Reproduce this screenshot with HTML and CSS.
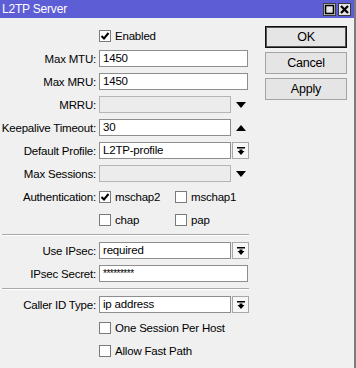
FILE: index.html
```html
<!DOCTYPE html>
<html lang="en">
  <head>
    <meta charset="UTF-8" />
    <title>L2TP Server</title>
    <link rel="stylesheet" href="styles.css">
  </head>
  <body>
    <div class="window">
      <!-- Title bar -->
      <div class="titlebar">
        <span class="title">L2TP Server</span>
        <div class="win-btns">
          <span class="win-btn">
            <svg width="11" height="11" viewBox="0 0 11 11"><rect x="1.5" y="1.5" width="8" height="8" fill="none" stroke="#000" stroke-width="1.6"/></svg>
          </span>
          <span class="win-btn">
            <svg width="11" height="11" viewBox="0 0 11 11"><path d="M2 2 L9 9 M9 2 L2 9" stroke="#000" stroke-width="2.2"/></svg>
          </span>
        </div>
      </div>

      <div class="content">
        <div class="form">
          <div class="row">
            <span class="label"></span>
            <label class="check"><span class="box checked"></span>Enabled</label>
          </div>
          <div class="row">
            <span class="label">Max MTU:</span>
            <div class="field"><div class="input wide">1450</div></div>
          </div>
          <div class="row">
            <span class="label">Max MRU:</span>
            <div class="field"><div class="input wide">1450</div></div>
          </div>
          <div class="row">
            <span class="label">MRRU:</span>
            <div class="field">
              <div class="input disabled"></div>
              <span class="arrow"><svg width="10" height="6" viewBox="0 0 10 6"><path d="M0 0 H10 L5 6 Z" fill="#000"/></svg></span>
            </div>
          </div>
          <div class="row">
            <span class="label">Keepalive Timeout:</span>
            <div class="field">
              <div class="input">30</div>
              <span class="arrow"><svg width="10" height="6" viewBox="0 0 10 6"><path d="M0 6 H10 L5 0 Z" fill="#000"/></svg></span>
            </div>
          </div>
          <div class="row">
            <span class="label">Default Profile:</span>
            <div class="field">
              <div class="input">L2TP-profile</div>
              <span class="drop"><svg width="8" height="8" viewBox="0 0 8 8"><rect x="0" y="0" width="8" height="1.5" fill="#000"/><path d="M2.5 2.5 H5.5 V4 H7.5 L4 8 L0.5 4 H2.5 Z" fill="#000"/></svg></span>
            </div>
          </div>
          <div class="row">
            <span class="label">Max Sessions:</span>
            <div class="field">
              <div class="input disabled"></div>
              <span class="arrow"><svg width="10" height="6" viewBox="0 0 10 6"><path d="M0 0 H10 L5 6 Z" fill="#000"/></svg></span>
            </div>
          </div>
          <div class="row">
            <span class="label">Authentication:</span>
            <div class="checks">
              <label class="check"><span class="box checked"></span>mschap2</label>
              <label class="check"><span class="box"></span>mschap1</label>
            </div>
          </div>
          <div class="row">
            <span class="label"></span>
            <div class="checks">
              <label class="check"><span class="box"></span>chap</label>
              <label class="check"><span class="box"></span>pap</label>
            </div>
          </div>

          <div class="separator"></div>

          <div class="row">
            <span class="label">Use IPsec:</span>
            <div class="field">
              <div class="input">required</div>
              <span class="drop"><svg width="8" height="8" viewBox="0 0 8 8"><rect x="0" y="0" width="8" height="1.5" fill="#000"/><path d="M2.5 2.5 H5.5 V4 H7.5 L4 8 L0.5 4 H2.5 Z" fill="#000"/></svg></span>
            </div>
          </div>
          <div class="row">
            <span class="label">IPsec Secret:</span>
            <div class="field"><div class="input wide secret">*********</div></div>
          </div>

          <div class="separator"></div>

          <div class="row">
            <span class="label">Caller ID Type:</span>
            <div class="field">
              <div class="input">ip address</div>
              <span class="drop"><svg width="8" height="8" viewBox="0 0 8 8"><rect x="0" y="0" width="8" height="1.5" fill="#000"/><path d="M2.5 2.5 H5.5 V4 H7.5 L4 8 L0.5 4 H2.5 Z" fill="#000"/></svg></span>
            </div>
          </div>
          <div class="row">
            <span class="label"></span>
            <label class="check"><span class="box"></span>One Session Per Host</label>
          </div>
          <div class="row">
            <span class="label"></span>
            <label class="check"><span class="box"></span>Allow Fast Path</label>
          </div>
        </div>

        <!-- Dialog buttons -->
        <div class="actions">
          <button class="btn btn-default">OK</button>
          <button class="btn">Cancel</button>
          <button class="btn">Apply</button>
        </div>
      </div>
    </div>
  </body>
</html>
```

FILE: styles.css
```css
body {
  margin: 0;
  font-family: "Liberation Sans", Arial, sans-serif;
  font-size: 11.5px;
  letter-spacing: -0.2px;
  color: #000;
  background-color: #f0f0f0;
}

/* Window frame */
.window {
  width: 354px;
  height: 368px;
  border-right: 2px solid #7c7c7c;
  background-color: #f0f0f0;
  overflow: hidden;
}

.titlebar {
  height: 18px;
  display: flex;
  align-items: center;
  justify-content: space-between;
  padding: 0 3px 0 2px;
  background-color: #5d5dd6;
}

.title {
  color: #fff;
  font-size: 12px;
}

.win-btns {
  display: flex;
  gap: 2px;
}

.win-btn {
  width: 13px;
  height: 13px;
  box-sizing: border-box;
  display: flex;
  align-items: center;
  justify-content: center;
  background-color: #e4e4e4;
  border: 1px solid #3a3a3a;
}

/* Content layout */
.content {
  display: flex;
  gap: 16px;
  padding-top: 8px;
}

.form {
  width: 249px;
  padding-top: 1px;
  display: flex;
  flex-direction: column;
  gap: 6px;
}

.row {
  display: grid;
  grid-template-columns: 96px 150px;
  column-gap: 3px;
  height: 17px;
  align-items: center;
}

.label {
  text-align: right;
  white-space: nowrap;
}

.field {
  display: flex;
  gap: 1px;
  height: 17px;
}

.input {
  width: 132px;
  height: 17px;
  box-sizing: border-box;
  border: 1px solid #8e8e8e;
  background-color: #fff;
  padding: 0 3px;
  line-height: 15px;
  white-space: nowrap;
}

.input.wide {
  width: 149px;
}

.input.disabled {
  background-color: #ececec;
  border-color: #b5b5b5;
}

.input.secret {
  font-size: 10px;
  letter-spacing: -0.5px;
}

.arrow {
  width: 17px;
  display: flex;
  align-items: center;
  justify-content: center;
}

.drop {
  width: 17px;
  height: 17px;
  box-sizing: border-box;
  border: 1px solid #a8a8a8;
  background-color: #f7f7f7;
  display: flex;
  align-items: center;
  justify-content: center;
}

/* Checkboxes */
.check {
  display: flex;
  align-items: center;
  gap: 4px;
  white-space: nowrap;
}

.box {
  width: 12px;
  height: 12px;
  box-sizing: border-box;
  border: 1px solid #7a7a7a;
  background-color: #fff;
  flex-shrink: 0;
}

.box.checked {
  background: #fff url("data:image/svg+xml,%3Csvg xmlns='http://www.w3.org/2000/svg' width='10' height='10' viewBox='0 0 10 10'%3E%3Cpath d='M1.5 5 L4 7.5 L8.5 2' fill='none' stroke='%23000' stroke-width='2'/%3E%3C/svg%3E") center no-repeat;
}

.checks {
  display: grid;
  grid-template-columns: 76px 74px;
}

.separator {
  margin-left: 2px;
  height: 0;
  border-top: 1px solid #a9a9a9;
  border-bottom: 1px solid #fff;
}

/* Buttons */
.actions {
  width: 82px;
  display: flex;
  flex-direction: column;
  gap: 4px;
}

.btn {
  height: 22px;
  font-family: "Liberation Sans", Arial, sans-serif;
  font-size: 12.5px;
  letter-spacing: -0.2px;
  color: #000;
  background-color: #e5e5e5;
  border: 1px solid #a3a3a3;
  padding: 0;
}

.btn-default {
  border: 1px solid #111;
  box-shadow: inset 0 0 0 1px #555;
}
```
